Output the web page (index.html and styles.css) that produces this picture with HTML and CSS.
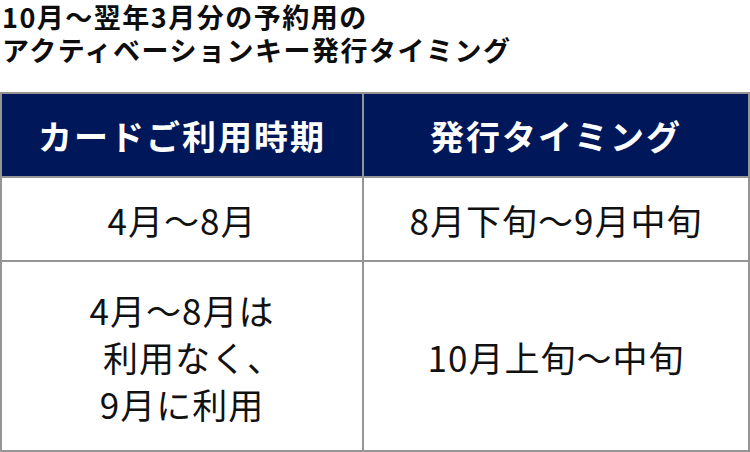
FILE: index.html
```html
<!DOCTYPE html>
<html lang="ja">
<head>
<meta charset="utf-8">
<title>アクティベーションキー発行タイミング</title>
<link rel="stylesheet" href="styles.css">
</head>
<body>
<h2 class="title"><span class="title-line">10月～翌年3月分の予約用の</span><span class="title-line">アクティベーションキー発行タイミング</span></h2>
<table class="timing">
  <colgroup>
    <col class="col-a">
    <col class="col-b">
  </colgroup>
  <thead>
    <tr class="head-row">
      <th>カードご利用時期</th>
      <th>発行タイミング</th>
    </tr>
  </thead>
  <tbody>
    <tr class="row-short">
      <td>4月～8月</td>
      <td>8月下旬～9月中旬</td>
    </tr>
    <tr class="row-tall">
      <td>4月～8月は<br><span class="indent">利用なく、</span><br>9月に利用</td>
      <td>10月上旬～中旬</td>
    </tr>
  </tbody>
</table>
</body>
</html>
```
FILE: styles.css
```css
html, body {
  margin: 0;
  padding: 0;
  background: #ffffff;
}
body {
  width: 750px;
  height: 452px;
  overflow: hidden;
  font-family: "Noto Sans CJK JP", "Noto Sans", sans-serif;
  color: #111111;
}
.title {
  margin: 0 0 26px 0;
  padding-left: 2px;
  font-size: 27px;
  line-height: 33px;
  font-weight: 700;
  letter-spacing: 1.5px;
  color: #0d0d0d;
}
.title-line {
  display: block;
}
.timing {
  width: 750px;
  table-layout: fixed;
  border-collapse: separate;
  border-spacing: 2px;
  background: #959595;
}
.col-a { width: 360px; }
.col-b { width: 384px; }
.timing th,
.timing td {
  padding: 0;
  text-align: center;
  vertical-align: middle;
}
.timing th {
  height: 82px;
  background: #00185a;
  color: #ffffff;
  font-size: 34px;
  font-weight: 700;
  letter-spacing: 2px;
}
.timing td {
  background: #ffffff;
  color: #111111;
  font-size: 35px;
  font-weight: 400;
  letter-spacing: 1px;
  line-height: 47px;
}
.row-short td { height: 82px; }
.row-tall td { height: 188px; }
.indent { padding-left: 22px; }
```
